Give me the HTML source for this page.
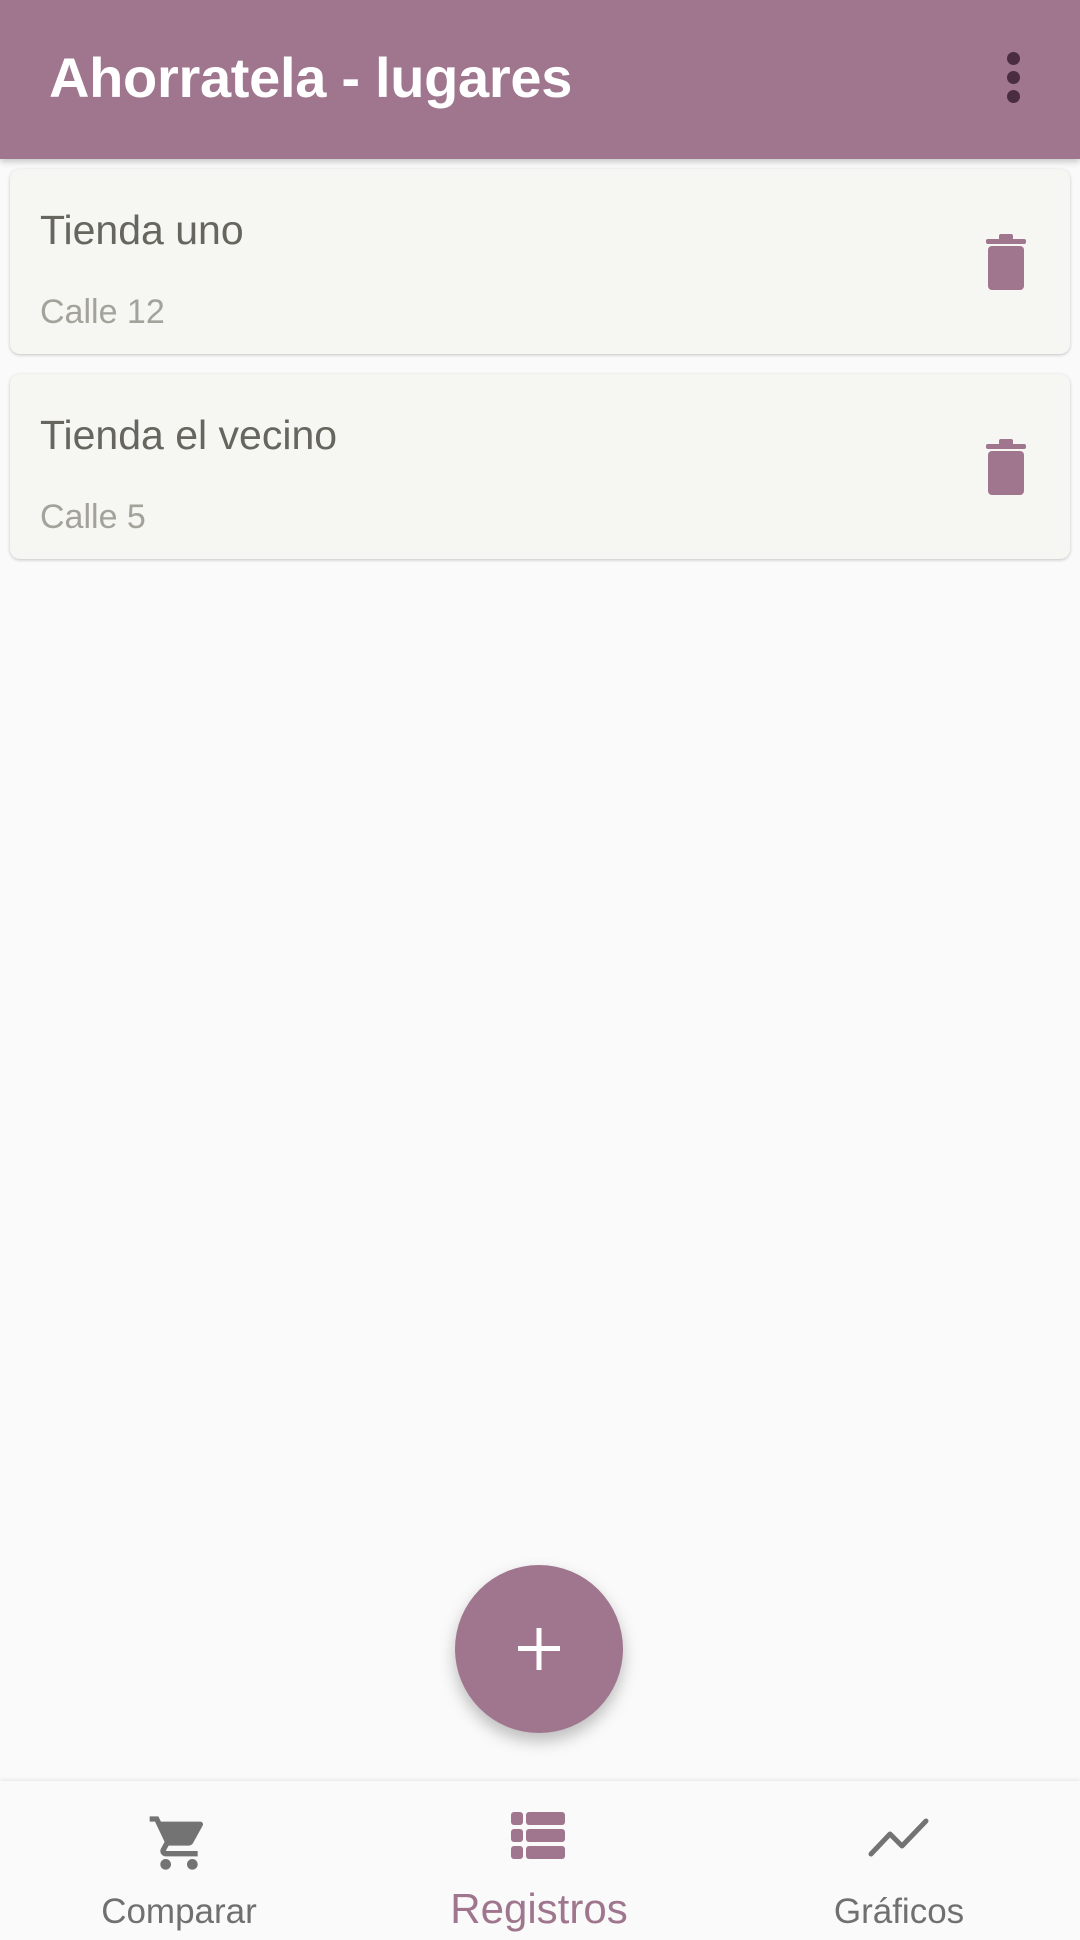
<!DOCTYPE html>
<html><head><meta charset="utf-8"><style>
*{margin:0;padding:0;box-sizing:border-box}
body{width:1080px;height:1940px;background:#fafafa;font-family:"Liberation Sans",sans-serif;position:relative;overflow:hidden}
.hdr{position:absolute;left:0;top:0;width:1080px;height:159px;background:#9f768e;box-shadow:0 3px 6px rgba(0,0,0,.2)}
.hdr h1{position:absolute;left:49px;top:45px;font-size:56px;font-weight:bold;color:#fff;letter-spacing:-0.3px;white-space:nowrap}
.dot{position:absolute;left:1007px;width:13px;height:13px;border-radius:50%;background:#4a2e40}
.card{position:absolute;left:10px;width:1060px;height:185px;background:#f6f6f2;border-radius:10px;box-shadow:0 1px 3px rgba(0,0,0,.22)}
.t{position:absolute;left:30px;top:38px;font-size:41px;color:#66665f}
.s{position:absolute;left:30px;top:124px;font-size:34px;color:#a3a39b}
.tr{position:absolute;left:976px;top:65px}
.fab{position:absolute;left:455px;top:1565px;width:168px;height:168px;border-radius:50%;background:#9f768e;box-shadow:0 8px 16px rgba(0,0,0,.25)}
.nav{position:absolute;left:0;top:1781px;width:1080px;height:159px;background:#fafafa;box-shadow:0 -2px 3px rgba(0,0,0,.06)}
.lb{position:absolute;top:111px;font-size:35px;color:#707070;text-align:center;width:300px}
</style></head><body>
<div class="hdr"><h1>Ahorratela - lugares</h1>
<div class="dot" style="top:52px"></div><div class="dot" style="top:71px"></div><div class="dot" style="top:90px"></div></div>

<div class="card" style="top:169px"><div class="t">Tienda uno</div><div class="s">Calle 12</div>
<svg class="tr" width="40" height="56" viewBox="0 0 40 56"><rect x="0" y="5" width="40" height="5" rx="2" fill="#9f768e"/><rect x="13" y="0" width="14" height="6" rx="2" fill="#9f768e"/><rect x="2" y="12" width="36" height="44" rx="4" fill="#9f768e"/></svg></div>

<div class="card" style="top:374px"><div class="t">Tienda el vecino</div><div class="s">Calle 5</div>
<svg class="tr" width="40" height="56" viewBox="0 0 40 56"><rect x="0" y="5" width="40" height="5" rx="2" fill="#9f768e"/><rect x="13" y="0" width="14" height="6" rx="2" fill="#9f768e"/><rect x="2" y="12" width="36" height="44" rx="4" fill="#9f768e"/></svg></div>

<div class="fab"><svg width="168" height="168" viewBox="0 0 168 168"><rect x="63" y="81" width="42" height="5" fill="#fff"/><rect x="81.5" y="63" width="5" height="42" fill="#fff"/></svg></div>

<div class="nav">
<svg style="position:absolute;left:147px;top:30px" width="64" height="64" viewBox="0 0 24 24"><path fill="#737373" d="M7 18c-1.1 0-2 .9-2 2s.9 2 2 2 2-.9 2-2-.9-2-2-2zM1 2v2h2l3.6 7.590-1.35 2.45c-.16.28-.25.61-.25.96 0 1.1.9 2 2 2h12v-2H7.42c-.14 0-.25-.11-.25-.25l.03-.12.9-1.63h7.45c.75 0 1.41-.41 1.750-1.03l3.58-6.49A1 1 0 0 0 20 4H5.21l-.94-2H1zm16 16c-1.1 0-2 .9-2 2s.9 2 2 2 2-.9 2-2-.9-2-2-2z"/></svg>
<div class="lb" style="left:29px">Comparar</div>
<svg style="position:absolute;left:511px;top:31px" width="54" height="48" viewBox="0 0 54 48"><g fill="#9f768e"><rect x="0" y="0" width="12" height="13" rx="3"/><rect x="15" y="0" width="39" height="13" rx="3"/><rect x="0" y="17" width="12" height="13" rx="3"/><rect x="15" y="17" width="39" height="13" rx="3"/><rect x="0" y="34" width="12" height="13" rx="3"/><rect x="15" y="34" width="39" height="13" rx="3"/></g></svg>
<div class="lb" style="left:389px;font-size:42px;top:104px;color:#9f768e">Registros</div>
<svg style="position:absolute;left:868px;top:36px" width="62" height="40" viewBox="0 0 62 40"><path d="M3 37 L22 17 L34 29 L58 4" stroke="#737373" stroke-width="5" fill="none" stroke-linecap="round" stroke-linejoin="round"/></svg>
<div class="lb" style="left:749px">Gráficos</div>
</div>
</body></html>
